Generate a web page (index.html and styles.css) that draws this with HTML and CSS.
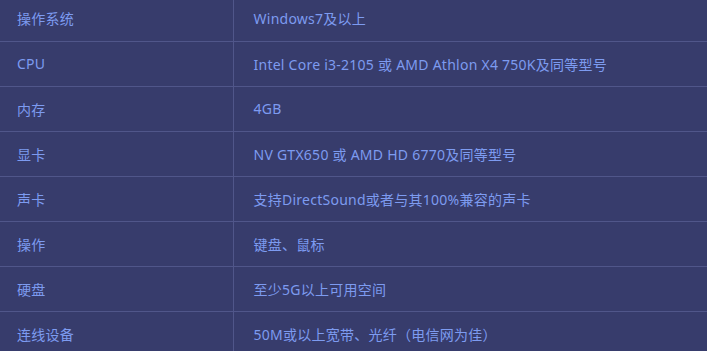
FILE: index.html
```html
<!DOCTYPE html>
<html lang="zh-CN">
<head>
<meta charset="utf-8">
<title>配置要求</title>
<link rel="stylesheet" href="styles.css">
</head>
<body>
<table class="spec">
  <tbody>
    <tr><td class="k">操作系统</td><td class="v">Windows7及以上</td></tr>
    <tr><td class="k">CPU</td><td class="v">Intel Core i3-2105 或 AMD Athlon X4 750K及同等型号</td></tr>
    <tr><td class="k">内存</td><td class="v">4GB</td></tr>
    <tr><td class="k">显卡</td><td class="v">NV GTX650 或 AMD HD 6770及同等型号</td></tr>
    <tr><td class="k">声卡</td><td class="v">支持DirectSound或者与其100%兼容的声卡</td></tr>
    <tr><td class="k">操作</td><td class="v">键盘、鼠标</td></tr>
    <tr><td class="k">硬盘</td><td class="v">至少5G以上可用空间</td></tr>
    <tr><td class="k">连线设备</td><td class="v">50M或以上宽带、光纤（电信网为佳）</td></tr>
  </tbody>
</table>
</body>
</html>
```
FILE: styles.css
```css
html, body {
  margin: 0;
  padding: 0;
  background: #373c6c;
  overflow: hidden;
}
.spec {
  border-collapse: collapse;
  margin: -4px 0 0 -3px;
  width: 720px;
  font-family: "Noto Sans", "Noto Sans CJK SC", sans-serif;
  font-size: 14px;
  letter-spacing: 0.25px;
  color: #7d9bf0;
}
.spec td {
  height: 45px;
  padding: 0 20px;
  border-bottom: 1px solid #50568a;
  vertical-align: middle;
  box-sizing: border-box;
}
.spec td.k {
  width: 236px;
  border-right: 1px solid #50568a;
}
```
